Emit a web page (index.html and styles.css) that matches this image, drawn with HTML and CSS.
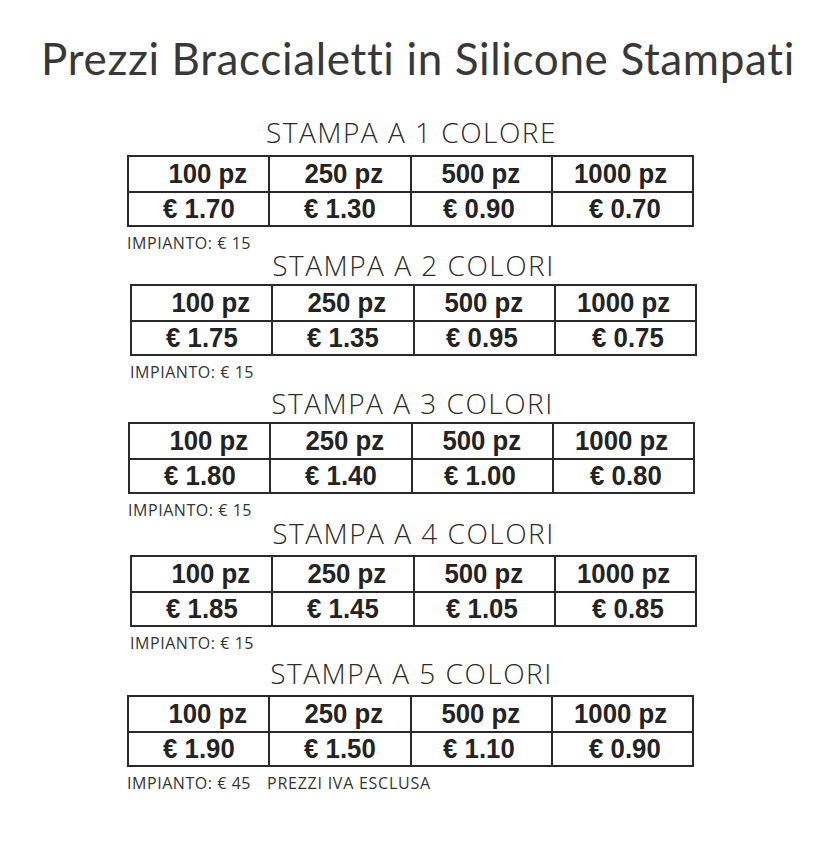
FILE: index.html
```html
<!DOCTYPE html>
<html lang="it">
<head>
<meta charset="utf-8">
<title>Prezzi Braccialetti in Silicone Stampati</title>
<link rel="stylesheet" href="styles.css">
</head>
<body>
<div class="page">
  <h1 class="title">Prezzi Braccialetti in Silicone Stampati</h1>

  <section class="block b1">
    <h2 class="heading">STAMPA A 1 COLORE</h2>
    <table class="prices">
      <tr class="qty"><td class="c1"><span>100 pz</span></td><td class="c2"><span>250 pz</span></td><td class="c3"><span>500 pz</span></td><td class="c4"><span>1000 pz</span></td></tr>
      <tr class="cost"><td class="c1"><span>€ 1.70</span></td><td class="c2"><span>€ 1.30</span></td><td class="c3"><span>€ 0.90</span></td><td class="c4"><span>€ 0.70</span></td></tr>
    </table>
    <p class="note">IMPIANTO: € 15</p>
  </section>

  <section class="block b2">
    <h2 class="heading">STAMPA A 2 COLORI</h2>
    <table class="prices">
      <tr class="qty"><td class="c1"><span>100 pz</span></td><td class="c2"><span>250 pz</span></td><td class="c3"><span>500 pz</span></td><td class="c4"><span>1000 pz</span></td></tr>
      <tr class="cost"><td class="c1"><span>€ 1.75</span></td><td class="c2"><span>€ 1.35</span></td><td class="c3"><span>€ 0.95</span></td><td class="c4"><span>€ 0.75</span></td></tr>
    </table>
    <p class="note">IMPIANTO: € 15</p>
  </section>

  <section class="block b3">
    <h2 class="heading">STAMPA A 3 COLORI</h2>
    <table class="prices">
      <tr class="qty"><td class="c1"><span>100 pz</span></td><td class="c2"><span>250 pz</span></td><td class="c3"><span>500 pz</span></td><td class="c4"><span>1000 pz</span></td></tr>
      <tr class="cost"><td class="c1"><span>€ 1.80</span></td><td class="c2"><span>€ 1.40</span></td><td class="c3"><span>€ 1.00</span></td><td class="c4"><span>€ 0.80</span></td></tr>
    </table>
    <p class="note">IMPIANTO: € 15</p>
  </section>

  <section class="block b4">
    <h2 class="heading">STAMPA A 4 COLORI</h2>
    <table class="prices">
      <tr class="qty"><td class="c1"><span>100 pz</span></td><td class="c2"><span>250 pz</span></td><td class="c3"><span>500 pz</span></td><td class="c4"><span>1000 pz</span></td></tr>
      <tr class="cost"><td class="c1"><span>€ 1.85</span></td><td class="c2"><span>€ 1.45</span></td><td class="c3"><span>€ 1.05</span></td><td class="c4"><span>€ 0.85</span></td></tr>
    </table>
    <p class="note">IMPIANTO: € 15</p>
  </section>

  <section class="block b5">
    <h2 class="heading">STAMPA A 5 COLORI</h2>
    <table class="prices">
      <tr class="qty"><td class="c1"><span>100 pz</span></td><td class="c2"><span>250 pz</span></td><td class="c3"><span>500 pz</span></td><td class="c4"><span>1000 pz</span></td></tr>
      <tr class="cost"><td class="c1"><span>€ 1.90</span></td><td class="c2"><span>€ 1.50</span></td><td class="c3"><span>€ 1.10</span></td><td class="c4"><span>€ 0.90</span></td></tr>
    </table>
    <p class="note">IMPIANTO: € 45<span class="iva">PREZZI IVA ESCLUSA</span></p>
  </section>
</div>
</body>
</html>
```

FILE: styles.css
```css
html, body {
  margin: 0;
  padding: 0;
  background: #ffffff;
}

.page {
  width: 826px;
  height: 845px;
  padding-top: 30px;
  box-sizing: border-box;
}

.title {
  margin: 0 0 0 10px;
  text-align: center;
  font-family: "Lato", "Open Sans", sans-serif;
  font-weight: 400;
  font-size: 44px;
  letter-spacing: 0.65px;
  line-height: 56px;
  color: #38383a;
}

.block {
  display: flex;
  flex-direction: column;
  align-items: flex-start;
  padding-left: 127px;
}

.b1 { margin-top: 32px; }
.b2 { margin-top: -1px; padding-left: 130px; }
.b3 { margin-top: 8px; padding-left: 128px; }
.b4 { margin-top: 0; padding-left: 130px; }
.b5 { margin-top: 7px; padding-left: 127px; }

.heading {
  margin: 0;
  width: 569px;
  text-align: center;
  font-family: "Open Sans", "Lato", sans-serif;
  font-weight: 300;
  font-size: 28px;
  letter-spacing: 1.5px;
  line-height: 28px;
  color: #2c2c2c;
}

.b2 .heading, .b4 .heading { margin-left: -1px; }

.prices {
  border-collapse: collapse;
  width: 567px;
  table-layout: fixed;
  font-family: "Liberation Sans", Arial, sans-serif;
  font-weight: 700;
  font-size: 28px;
  color: #232323;
}

.b1 .prices { margin-top: 9px; }
.b2 .prices { margin-top: 5px; }
.b3 .prices { margin-top: 5px; }
.b4 .prices { margin-top: 8px; }
.b5 .prices { margin-top: 8px; }

.prices td {
  border: 2px solid #2a2a2a;
  text-align: center;
  padding: 0;
  line-height: 30px;
}

.prices td span {
  display: inline-block;
  transform: scaleX(0.92);
}

.qty td { height: 34px; }
.cost td { height: 32px; }

.qty .c1 { padding-left: 18px; }
.qty .c2 { padding-left: 7px; }
.qty .c4 { padding-right: 4px; }
.cost .c3 { padding-right: 5px; }
.cost .c4 { padding-left: 6px; }

.note {
  margin: 7px 0 0 0;
  font-family: "Open Sans", "Lato", sans-serif;
  font-weight: 400;
  font-size: 16px;
  letter-spacing: 0.55px;
  line-height: 18px;
  color: #333333;
}

.iva {
  margin-left: 16px;
  letter-spacing: 0.75px;
}
```
